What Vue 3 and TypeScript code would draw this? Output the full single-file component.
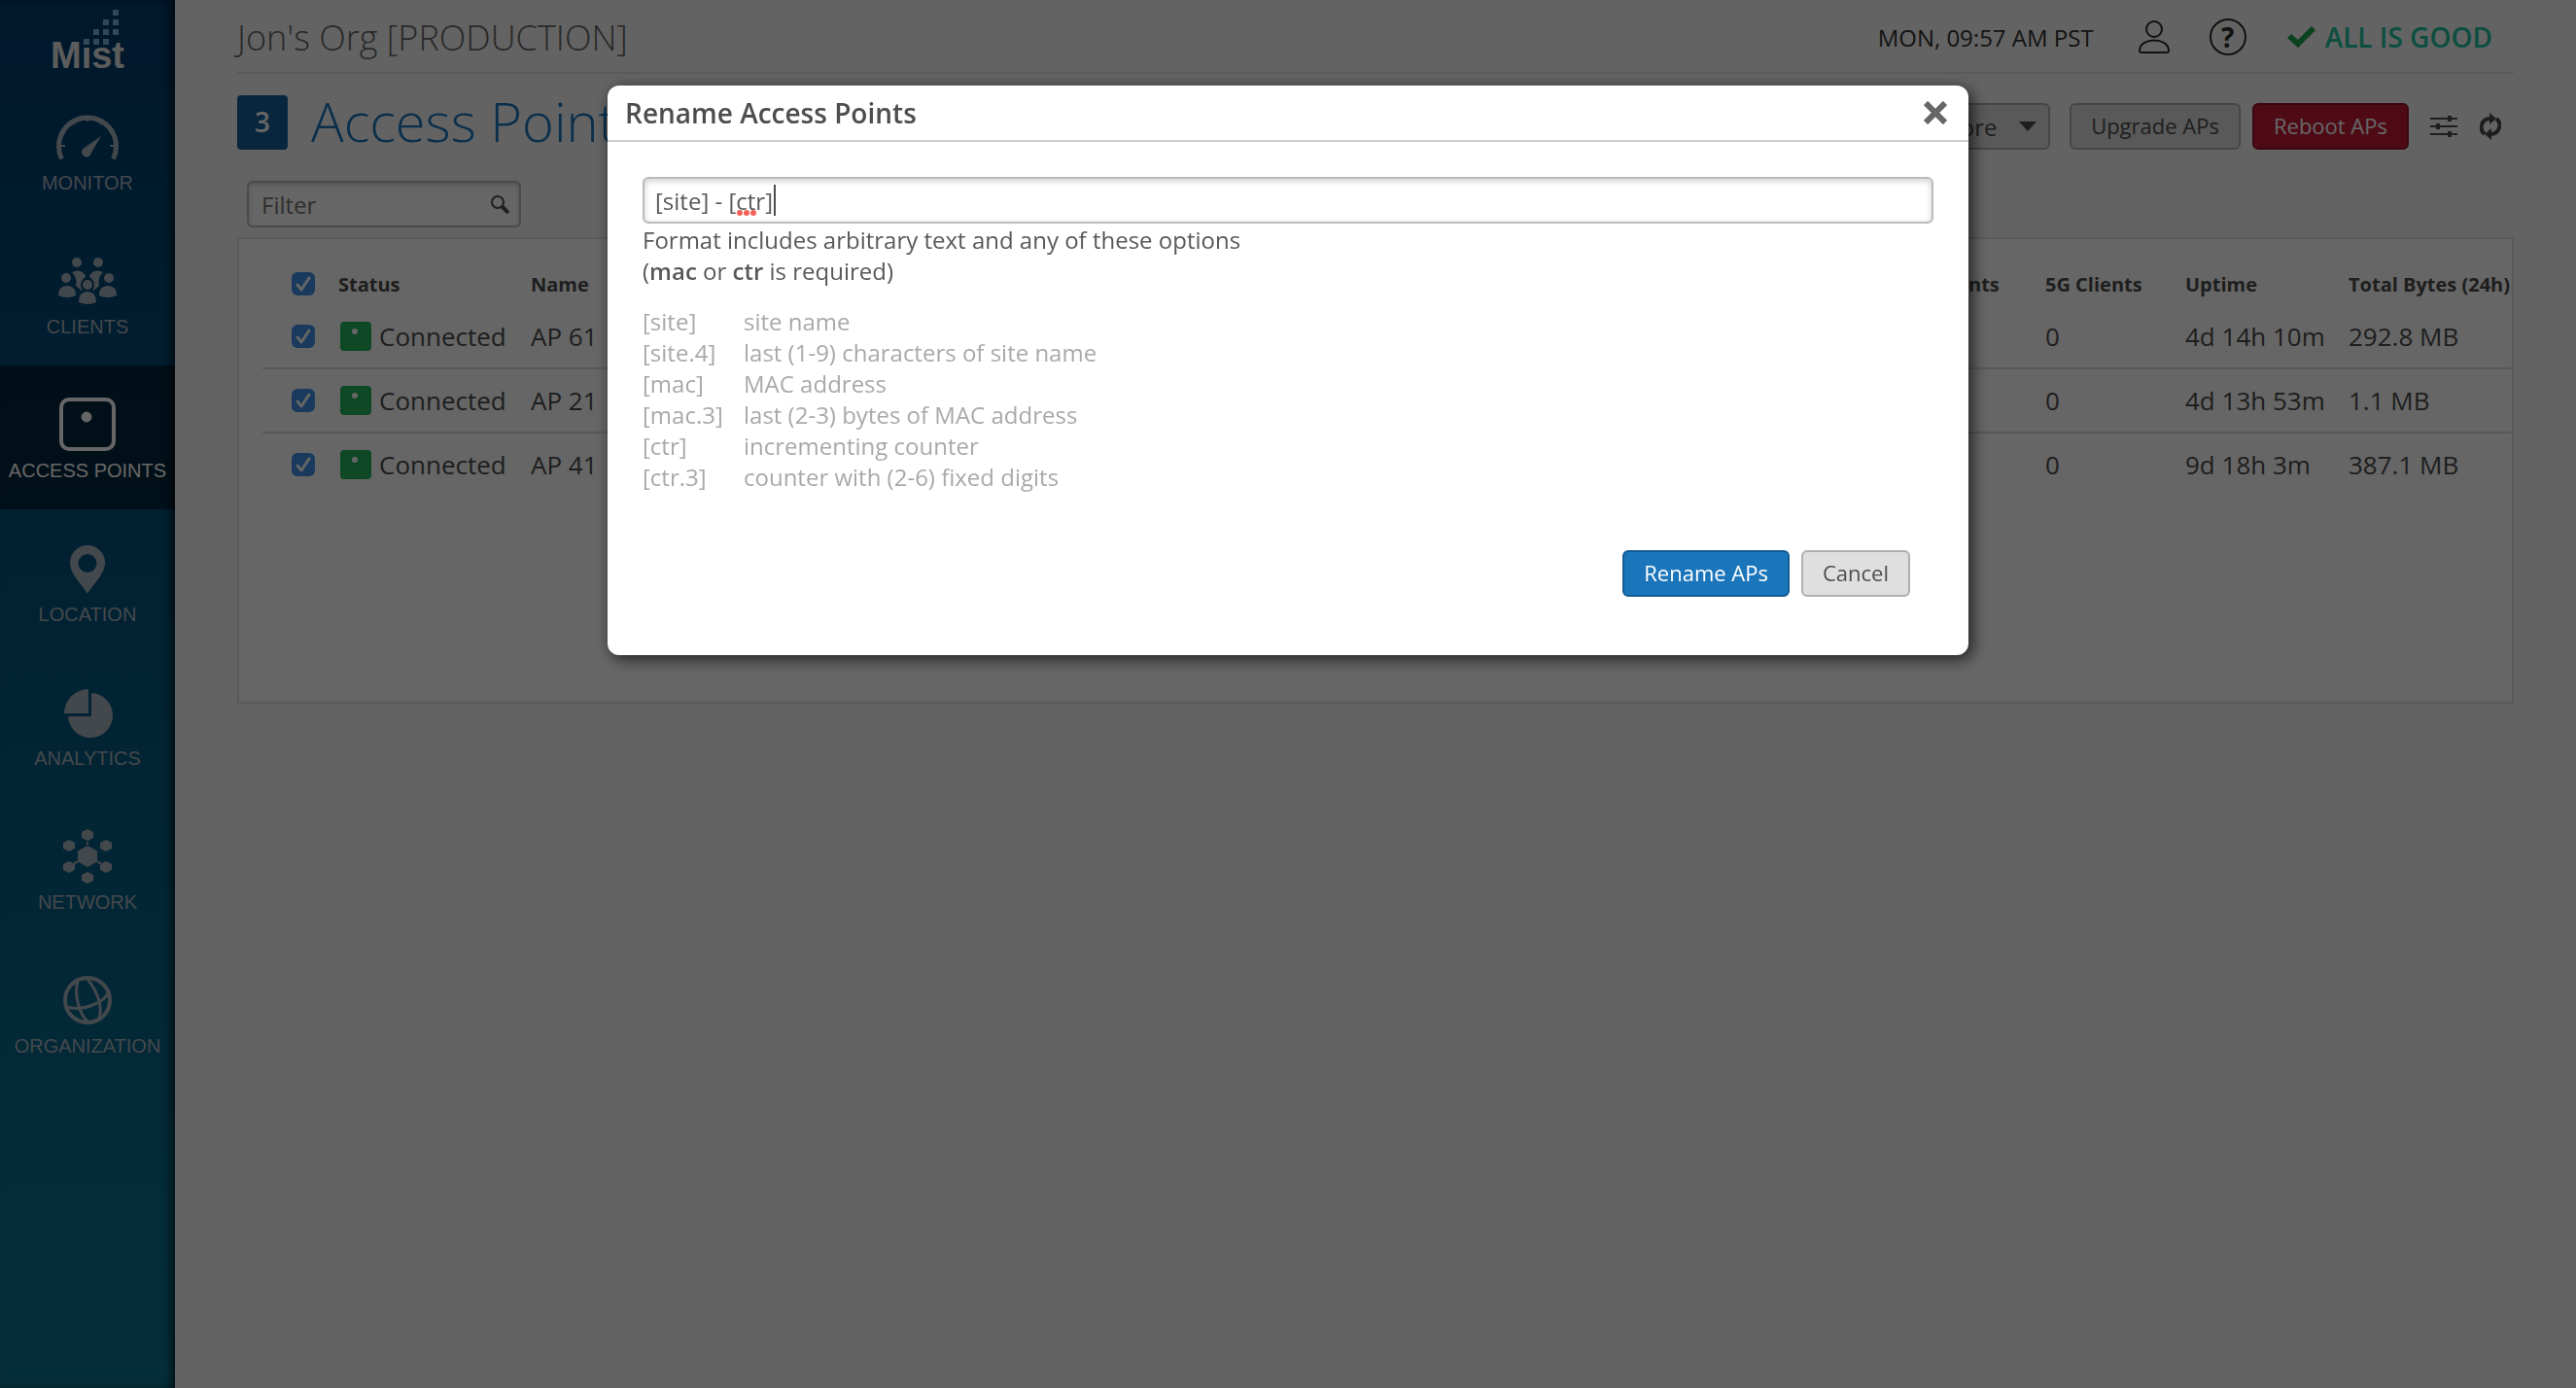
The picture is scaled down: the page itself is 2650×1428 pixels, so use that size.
<script setup lang="ts">
import { ref } from 'vue'

interface NavItem {
  id: string
  label: string
}

interface AccessPoint {
  name: string
  clients24: number
  clients5: number
  uptime: string
  bytes: string
}

const navItems: NavItem[] = [
  { id: 'monitor', label: 'MONITOR' },
  { id: 'clients', label: 'CLIENTS' },
  { id: 'aps', label: 'ACCESS POINTS' },
  { id: 'location', label: 'LOCATION' },
  { id: 'analytics', label: 'ANALYTICS' },
  { id: 'network', label: 'NETWORK' },
  { id: 'organization', label: 'ORGANIZATION' },
]
const activeNav = 'aps'

const accessPoints: AccessPoint[] = [
  { name: 'AP 61', clients24: 0, clients5: 0, uptime: '4d 14h 10m', bytes: '292.8 MB' },
  { name: 'AP 21', clients24: 0, clients5: 0, uptime: '4d 13h 53m', bytes: '1.1 MB' },
  { name: 'AP 41', clients24: 0, clients5: 0, uptime: '9d 18h 3m', bytes: '387.1 MB' },
]

const formatOptions: [string, string][] = [
  ['[site]', 'site name'],
  ['[site.4]', 'last (1-9) characters of site name'],
  ['[mac]', 'MAC address'],
  ['[mac.3]', 'last (2-3) bytes of MAC address'],
  ['[ctr]', 'incrementing counter'],
  ['[ctr.3]', 'counter with (2-6) fixed digits'],
]

const nameFormat = ref('[site] - [ctr]')
const filter = ref('')

const logoSquares: [number, number][] = [
  [116, 10],
  [106, 20], [116, 20],
  [96, 30], [106, 30], [116, 30],
  [86, 40], [96, 40], [106, 40],
]

const hexCentres: [number, number][] = [
  [32, 10], [51, 21], [51, 43], [32, 54], [13, 43], [13, 21],
]

function hexagon(cx: number, cy: number, w: number, r: number): string {
  const h = r / 2
  return `${cx},${cy - r} ${cx + w},${cy - h} ${cx + w},${cy + h} ${cx},${cy + r} ${cx - w},${cy + h} ${cx - w},${cy - h}`
}
</script>

<template>
  <div class="app">
    <nav class="sidebar" aria-label="Main">
      <svg class="logo" viewBox="0 0 180 80" role="img" aria-label="Mist">
        <text x="52" y="70" class="logo-text">Mist</text>
        <rect v-for="([x, y], i) in logoSquares" :key="i" :x="x" :y="y" width="6" height="6" fill="#7ab4d8" />
      </svg>
      <a v-for="item in navItems" :key="item.id" href="#" class="nav-item" :class="{ active: item.id === activeNav }">
        <svg class="nav-icon" viewBox="0 0 64 64" aria-hidden="true">
          <g v-if="item.id === 'monitor'" fill="none" stroke="currentColor">
            <path d="M5.500 54.500A29.500 29.500 0 1 1 58.500 54.500" stroke-width="5" />
            <path d="M4 41H9M9 28l-4-3M19 19l-3-5M32 16V10M45 19l3-5M55 28l4-3M55 41H60" stroke-width="2" />
            <path d="M46 31L28 43.500A5 5 0 1 0 36 48Z" fill="currentColor" stroke="none" />
          </g>
          <g v-else-if="item.id === 'clients'" fill="currentColor">
            <circle cx="21" cy="13" r="5" />
            <circle cx="43" cy="13" r="5" />
            <circle cx="10" cy="29" r="5" />
            <circle cx="54" cy="29" r="5" />
            <circle cx="32" cy="36" r="5" />
            <path d="M16 23Q22 20 27 23Q30 26 30 28Q25 31 25 37L27 43L20 37Q22 29 16 23Z" />
            <path d="M48 23Q42 20 37 23Q34 26 34 28Q39 31 39 37L37 43L44 37Q42 29 48 23Z" />
            <path d="M2 47Q2 37 11 37Q20 37 20 47Q11 51 2 47Z" />
            <path d="M44 47Q44 37 53 37Q62 37 62 47Q53 51 44 47Z" />
            <path d="M23 54Q23 43 32 43Q41 43 41 54Q32 58 23 54Z" />
          </g>
          <g v-else-if="item.id === 'aps'" fill="none" stroke="currentColor">
            <rect x="5" y="6" width="54" height="51" rx="8" stroke-width="4" />
            <circle cx="31" cy="24" r="5" fill="currentColor" />
          </g>
          <path
            v-else-if="item.id === 'location'"
            fill="currentColor"
            fill-rule="evenodd"
            d="M32 58C28 50 14 38 14 26A18 18 0 0 1 50 26C50 38 36 50 32 58ZM32 17A9.500 9.500 0 1 0 32 36A9.500 9.500 0 1 0 32 17Z"
          />
          <g v-else-if="item.id === 'analytics'" fill="currentColor">
            <path d="M33 8V33H8A25 25 0 0 1 33 8Z" />
            <path d="M36 12A23 23 0 1 1 12 36H36Z" />
          </g>
          <g v-else-if="item.id === 'network'" fill="currentColor">
            <polygon :points="hexagon(32, 32, 10, 11)" />
            <polygon v-for="([x, y], i) in hexCentres" :key="i" :points="hexagon(x, y, 6, 6)" />
            <path d="M32 17V20M18 39.500L22 37.500M46 39.500L42 37.500" stroke="currentColor" stroke-width="2" />
          </g>
          <g v-else fill="none" stroke="currentColor" stroke-width="4">
            <circle cx="32" cy="32" r="23" />
            <path d="M22 12C18 26 23 46 33 55M31 9C42 22 49 40 43 52M11 39C28 44 50 34 54 23" stroke-width="3" />
          </g>
        </svg>
        <span>{{ item.label }}</span>
      </a>
    </nav>

    <main class="main">
      <header class="topbar">
        <div class="org">Jon's Org [PRODUCTION]</div>
        <div class="topbar-right">
          <span class="clock">MON, 09:57 AM PST</span>
          <button class="icon-button user" type="button" aria-label="Account">
            <svg width="32" height="34" viewBox="0 0 32 34" fill="none" stroke="#2b2b2b" stroke-width="2">
              <ellipse cx="16" cy="9" rx="8" ry="8" />
              <path d="M1 31C1 17 31 17 31 31Q31 33 29 33H3Q1 33 1 31Z" />
            </svg>
          </button>
          <button class="icon-button help" type="button" aria-label="Help">?</button>
          <span class="status">
            <svg width="30" height="22" viewBox="0 0 30 22" fill="none" stroke="#1fa34f" stroke-width="6">
              <path d="M2 10L11 18L27 2" />
            </svg>
            ALL IS GOOD
          </span>
        </div>
      </header>

      <div class="title-row">
        <span class="count">3</span>
        <h1>Access Points</h1>
        <div class="actions">
          <div class="more">
            <select aria-label="More actions">
              <option>More</option>
            </select>
            <svg width="18" height="10" viewBox="0 0 18 10" aria-hidden="true"><path d="M0 0H18L9 10Z" fill="#4d4d4d" /></svg>
          </div>
          <button class="btn" type="button">Upgrade APs</button>
          <button class="btn danger" type="button">Reboot APs</button>
          <button class="icon-button sliders" type="button" aria-label="Table settings">
            <svg width="28" height="24" viewBox="0 0 28 24" fill="none" stroke="#4d4d4d">
              <path d="M0 4H28M0 12H28M0 20H28" stroke-width="2" />
              <path d="M20 1V7M8 9V15M20 17V23" stroke-width="4" />
            </svg>
          </button>
          <button class="icon-button" type="button" aria-label="Refresh">
            <svg width="22" height="28" viewBox="0 0 22 28" fill="none" stroke="#4d4d4d" stroke-width="4">
              <path d="M5 22A9 9 0 0 1 10 6M17 6A9 9 0 0 1 12 22" />
              <path d="M10 0L17 6L10 12ZM12 16V28L5 22Z" fill="#4d4d4d" stroke="none" />
            </svg>
          </button>
        </div>
      </div>

      <label class="filter">
        <input v-model="filter" type="text" placeholder="Filter" aria-label="Filter" />
        <svg width="20" height="20" viewBox="0 0 20 20" fill="none" stroke="#4d4d4d" aria-hidden="true">
          <circle cx="8" cy="8" r="6" stroke-width="2" />
          <path d="M12 12L19 19" stroke-width="4" />
        </svg>
      </label>

      <section class="panel">
        <table>
          <colgroup>
            <col class="c-check" />
            <col class="c-status" />
            <col />
            <col class="c-24" />
            <col class="c-5" />
            <col class="c-uptime" />
            <col class="c-bytes" />
          </colgroup>
          <thead>
            <tr>
              <th class="check"><input type="checkbox" checked aria-label="Select all" /></th>
              <th>Status</th>
              <th>Name</th>
              <th>2.4G Clients</th>
              <th>5G Clients</th>
              <th>Uptime</th>
              <th>Total Bytes (24h)</th>
            </tr>
          </thead>
          <tbody>
            <tr v-for="ap in accessPoints" :key="ap.name">
              <td class="check"><input type="checkbox" checked :aria-label="`Select ${ap.name}`" /></td>
              <td>
                <div class="state">
                  <svg width="32" height="30" viewBox="0 0 32 30" aria-hidden="true">
                    <rect width="32" height="30" rx="4" fill="#26b35a" />
                    <circle cx="15" cy="10" r="3" fill="#fff" />
                  </svg>
                  Connected
                </div>
              </td>
              <td>{{ ap.name }}</td>
              <td>{{ ap.clients24 }}</td>
              <td>{{ ap.clients5 }}</td>
              <td>{{ ap.uptime }}</td>
              <td>{{ ap.bytes }}</td>
            </tr>
          </tbody>
        </table>
      </section>
    </main>

    <div class="overlay">
      <div class="dialog" role="dialog" aria-modal="true" aria-labelledby="dialog-title">
        <header class="dialog-head">
          <h2 id="dialog-title">Rename Access Points</h2>
          <button class="icon-button" type="button" aria-label="Close">
            <svg width="24" height="24" viewBox="0 0 24 24" stroke="#666" stroke-width="6">
              <path d="M2 2L22 22M22 2L2 22" />
            </svg>
          </button>
        </header>
        <div class="dialog-body">
          <div class="name-field">
            <input v-model="nameFormat" type="text" spellcheck="false" aria-label="Name format" aria-describedby="format-help" />
            <svg class="spelling" width="20" height="6" viewBox="0 0 20 6" fill="#f4605a" aria-hidden="true">
              <circle cx="3" cy="3" r="3" />
              <circle cx="10" cy="3" r="3" />
              <circle cx="17" cy="3" r="3" />
            </svg>
            <span class="caret"></span>
          </div>
          <p id="format-help">
            Format includes arbitrary text and any of these options<br />
            (<b>mac</b> or <b>ctr</b> is required)
          </p>
          <dl>
            <template v-for="[token, meaning] in formatOptions" :key="token">
              <dt>{{ token }}</dt>
              <dd>{{ meaning }}</dd>
            </template>
          </dl>
          <div class="dialog-actions">
            <button class="btn primary" type="button">Rename APs</button>
            <button class="btn" type="button">Cancel</button>
          </div>
        </div>
      </div>
    </div>
  </div>
</template>

<style>
body {
  margin: 0;
  background: #f7f7f7;
}
</style>

<style scoped>
* {
  box-sizing: border-box;
}

.app {
  display: flex;
  min-height: 100vh;
  font-family: 'Open Sans', 'Noto Sans', sans-serif;
  font-size: 24px;
  color: #4d4d4d;
}

button,
input,
select {
  font-family: inherit;
  margin: 0;
}

.sidebar {
  flex: 0 0 180px;
  background: linear-gradient(#003c6e, #0c7391);
  box-shadow: inset -6px 0 8px -2px rgba(0, 0, 0, 0.6);
}

.logo {
  display: block;
  width: 180px;
  height: 80px;
}

.logo-text {
  font: bold 38px 'Liberation Sans', sans-serif;
  fill: #e6e6e6;
}

.nav-item {
  display: flex;
  flex-direction: column;
  align-items: center;
  gap: 4px;
  height: 148px;
  padding-top: 29px;
  color: #a9b4bf;
  font: 20px/22px 'Liberation Sans', sans-serif;
  text-decoration: none;
  white-space: nowrap;
}

.nav-item.active {
  background: rgba(0, 0, 0, 0.5);
  color: #fff;
}

.nav-icon {
  width: 64px;
  height: 64px;
}

.main {
  flex: 1;
  min-width: 0;
  padding: 0 64px;
}

.topbar {
  display: flex;
  justify-content: space-between;
  height: 76px;
  border-bottom: 2px solid #e2e2e2;
}

.org {
  font-size: 36px;
  font-weight: 300;
  line-height: 78px;
  color: #666;
}

.topbar-right {
  display: flex;
  align-items: center;
  padding: 2px 22px 0 0;
  color: #333;
}

.clock {
  font-size: 24px;
}

.icon-button {
  display: flex;
  align-items: center;
  justify-content: center;
  padding: 0;
  border: 0;
  background: none;
}

.user {
  margin-left: 46px;
}

.help {
  width: 38px;
  height: 38px;
  margin: 0 42px 0 41px;
  border: 2px solid #2b2b2b;
  border-radius: 50%;
  font-size: 28px;
  font-weight: 700;
  line-height: 34px;
  color: #2b2b2b;
}

.status {
  display: flex;
  align-items: center;
  gap: 9px;
  font-size: 28px;
  font-weight: 600;
  line-height: 36px;
  color: #20c4a0;
}

.title-row {
  display: flex;
  align-items: center;
  height: 56px;
  margin-top: 22px;
}

.count {
  width: 52px;
  padding-bottom: 2px;
  border-radius: 4px;
  background: #16619b;
  color: #fff;
  font-size: 28px;
  font-weight: 600;
  line-height: 54px;
  text-align: center;
}

h1 {
  margin: 0 0 4px 24px;
  font-size: 56px;
  font-weight: 300;
  line-height: 56px;
  color: #1b75bb;
}

.actions {
  display: flex;
  align-items: center;
  align-self: flex-end;
  height: 48px;
  margin-left: auto;
  padding-right: 13px;
}

.btn {
  height: 48px;
  padding: 0 20px 2px;
  border: 2px solid #b0b0b0;
  border-radius: 6px;
  background: #dfdfdf;
  color: #4d4d4d;
  font-size: 22px;
}

.more {
  display: flex;
  align-items: center;
  width: 136px;
  margin-right: 20px;
  padding-right: 12px;
  border: 2px solid #b0b0b0;
  border-radius: 6px;
  background: #dfdfdf;
}

.more select {
  flex: 1;
  min-width: 0;
  height: 44px;
  padding: 0 0 0 20px;
  border: 0;
  appearance: none;
  background: none;
  color: #4d4d4d;
  font-size: 24px;
}

.danger {
  margin: 0 22px 0 12px;
  border-color: #93122a;
  background: #c41c38;
  color: #fff;
  font-weight: 500;
}

.sliders {
  margin-right: 23px;
}

.filter {
  display: flex;
  align-items: center;
  width: 282px;
  height: 48px;
  margin: 32px 0 10px 10px;
  padding: 0 10px 0 13px;
  border: 2px solid #b8b8b8;
  border-radius: 6px;
  background: #fff;
  box-shadow: inset 0 2px 4px rgba(0, 0, 0, 0.2);
}

.filter input {
  flex: 1;
  min-width: 0;
  padding: 0;
  border: 0;
  outline: 0;
  background: none;
  font-size: 24px;
}

.filter input::placeholder {
  color: #757575;
  opacity: 1;
}

.panel {
  min-height: 480px;
  padding: 24px 0 0 24px;
  border: 2px solid #e2e2e2;
  background: #fff;
}

table {
  width: 100%;
  border-collapse: separate;
  border-spacing: 0;
  table-layout: fixed;
}

.c-check {
  width: 78px;
}

.c-status {
  width: 198px;
}

.c-24 {
  width: 164px;
}

.c-5 {
  width: 144px;
}

.c-uptime,
.c-bytes {
  width: 168px;
}

th,
td {
  padding: 0;
  text-align: left;
  white-space: nowrap;
}

th {
  height: 44px;
  font-size: 20px;
  font-weight: 700;
}

td {
  height: 66px;
  border-bottom: 2px solid #dcdcdc;
  font-size: 26px;
  line-height: 34px;
}

tbody tr:last-child td {
  border-bottom-color: transparent;
}

th.check,
td.check {
  padding-left: 30px;
}

.check input {
  display: block;
  width: 24px;
  height: 24px;
  border-radius: 6px;
  appearance: none;
  background: #3f8ee8 url("data:image/svg+xml,%3Csvg xmlns='http://www.w3.org/2000/svg' viewBox='0 0 24 24'%3E%3Cpath d='M6 13L10 18L18 6' fill='none' stroke='white' stroke-width='3' stroke-linecap='round' stroke-linejoin='round'/%3E%3C/svg%3E");
}

.state {
  display: flex;
  align-items: center;
  gap: 8px;
  padding-left: 2px;
}

.overlay {
  position: fixed;
  inset: 0;
  display: flex;
  align-items: flex-start;
  justify-content: center;
  padding-top: 88px;
  background: rgba(0, 0, 0, 0.6);
}

.dialog {
  width: 1400px;
  max-width: 100%;
  border-radius: 12px;
  background: #fff;
  box-shadow: 4px 4px 16px rgba(0, 0, 0, 0.7);
}

.dialog-head {
  display: flex;
  align-items: center;
  justify-content: space-between;
  height: 58px;
  padding: 0 22px 0 18px;
  border-bottom: 2px solid #ccc;
}

h2 {
  margin: 0;
  font-size: 28px;
  font-weight: 600;
  line-height: 54px;
}

.dialog-body {
  padding: 36px 36px 60px;
  color: #595959;
}

.name-field {
  position: relative;
}

.name-field input {
  width: 100%;
  height: 48px;
  padding: 0 11px;
  border: 2px solid #bbb;
  border-radius: 6px;
  outline: 0;
  background: #fff;
  box-shadow: inset 0 2px 6px rgba(0, 0, 0, 0.2);
  color: #595959;
  font-size: 24px;
}

.spelling {
  position: absolute;
  left: 97px;
  top: 34px;
}

.caret {
  position: absolute;
  left: 135px;
  top: 8px;
  width: 2px;
  height: 32px;
  background: #4d4d4d;
}

p {
  margin: 1px 0 20px;
  line-height: 32px;
}

b {
  font-weight: 600;
}

dl {
  display: grid;
  grid-template-columns: 104px 1fr;
  margin: 0 0 59px;
  line-height: 32px;
  color: #a9a9a9;
}

dd {
  margin: 0;
}

.dialog-actions {
  display: flex;
  justify-content: flex-end;
  gap: 12px;
  padding-right: 24px;
}

.primary {
  border-color: #155c94;
  background: #1b75bb;
  color: #fff;
  font-weight: 500;
}
</style>
